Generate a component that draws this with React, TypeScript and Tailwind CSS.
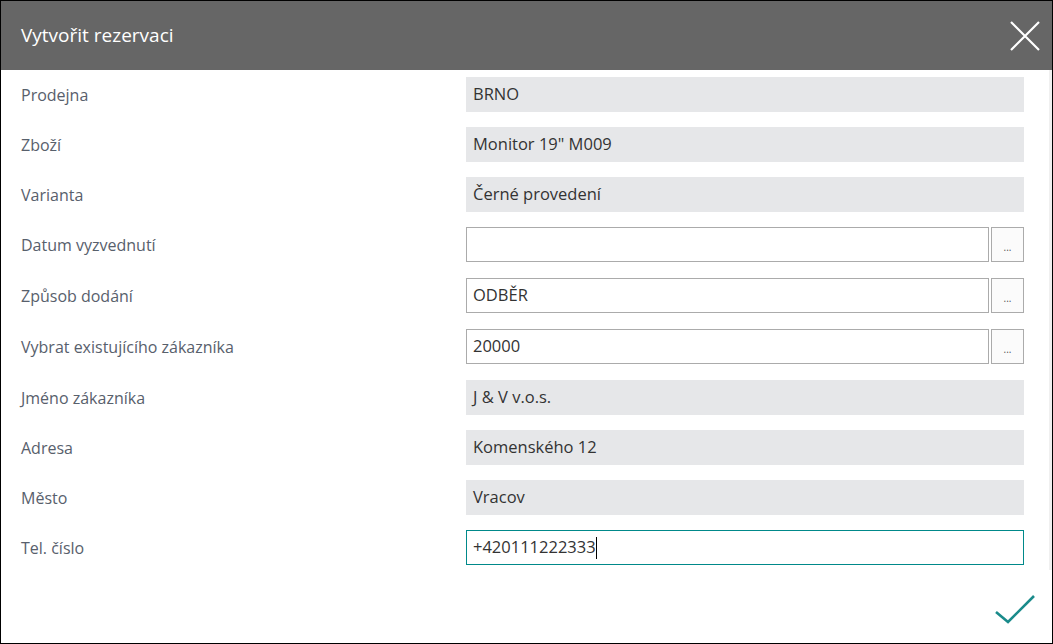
const rows: { label: string; value: string; kind: 'readonly' | 'picker' | 'focus' }[] = [
  { label: 'Prodejna', value: 'BRNO', kind: 'readonly' },
  { label: 'Zboží', value: 'Monitor 19" M009', kind: 'readonly' },
  { label: 'Varianta', value: 'Černé provedení', kind: 'readonly' },
  { label: 'Datum vyzvednutí', value: '', kind: 'picker' },
  { label: 'Způsob dodání', value: 'ODBĚR', kind: 'picker' },
  { label: 'Vybrat existujícího zákazníka', value: '20000', kind: 'picker' },
  { label: 'Jméno zákazníka', value: 'J & V v.o.s.', kind: 'readonly' },
  { label: 'Adresa', value: 'Komenského 12', kind: 'readonly' },
  { label: 'Město', value: 'Vracov', kind: 'readonly' },
  { label: 'Tel. číslo', value: '+420111222333', kind: 'focus' },
]

function Field({ value, kind }: { value: string; kind: 'readonly' | 'picker' | 'focus' }) {
  if (kind === 'readonly') {
    return (
      <div className="h-[35px] bg-[#e6e7e9] px-[7px] flex items-center text-[#333] truncate">
        {value}
      </div>
    )
  }
  if (kind === 'picker') {
    return (
      <div className="h-[36px] flex gap-[2px]">
        <div className="flex-1 h-[35px] border border-[#ababab] bg-white px-[6px] flex items-center text-[#333]">
          {value}
        </div>
        <button className="w-[33px] h-[35px] border border-[#ababab] bg-[#fbfbfb] flex items-center justify-center text-[10px] leading-none text-[#555] pt-[4px]">
          ...
        </button>
      </div>
    )
  }
  return (
    <div className="h-[35px] border border-[#00898a] bg-white px-[6px] flex items-center text-[#333]">
      <span>{value}</span>
      <span className="w-px h-[22px] bg-black" />
    </div>
  )
}

export default function App() {
  return (
    <div
      className="w-[1053px] h-[644px] border border-black bg-white flex flex-col overflow-hidden"
      style={{ fontFamily: '"Open Sans", "Noto Sans", sans-serif' }}
    >
      <div className="h-[69px] bg-[#666666] flex items-center justify-between pl-5 pr-[11px] shrink-0">
        <h1 className="text-white text-[19px]">Vytvořit rezervaci</h1>
        <svg width="32" height="32" viewBox="0 0 32 32" className="text-white">
          <path d="M2 2L30 30M30 2L2 30" stroke="currentColor" strokeWidth="2.2" fill="none" />
        </svg>
      </div>

      <div className="flex-1 flex">
        <div className="flex-1 flex flex-col pl-5 pr-[25px] pt-[7px]">
          <div className="flex flex-col gap-[15px]">
            {rows.map((r) => (
              <div key={r.label} className="flex items-start">
                <div className="w-[445px] h-[35px] flex items-center text-[16px] text-[#58606c] shrink-0">
                  {r.label}
                </div>
                <div className="flex-1 text-[16.5px]">
                  <Field value={r.value} kind={r.kind} />
                </div>
              </div>
            ))}
          </div>
          <div className="flex justify-end pt-[28px] -mr-[12px]">
            <svg width="42" height="32" viewBox="0 0 42 32" className="text-[#1a8b8b]">
              <path d="M2 19L14 29L40 3" stroke="currentColor" strokeWidth="2.6" fill="none" />
            </svg>
          </div>
        </div>
        <div className="w-[3px] h-[500px] bg-[#f0f0f0] shrink-0" />
      </div>
    </div>
  )
}
